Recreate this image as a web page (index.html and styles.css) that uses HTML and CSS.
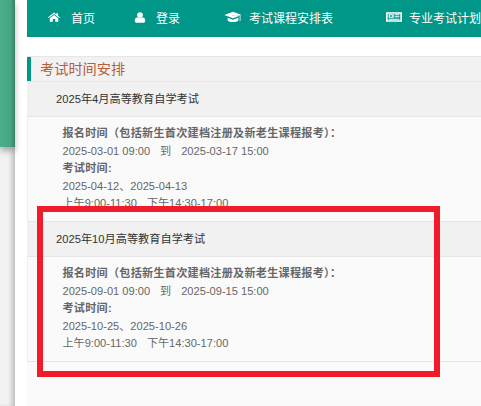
FILE: index.html
```html
<!DOCTYPE html>
<html lang="zh-CN">

<head>
  <meta charset="UTF-8" />
  <title>考试时间安排</title>
  <link rel="stylesheet" href="styles.css">
</head>

<body>
  <div class="page">
    <!-- 左侧边栏 -->
    <div class="side">
      <div class="side-top"></div>
    </div>
    <div class="main">
      <!-- 导航 -->
      <ul class="nav">
        <li class="nav-home">
          <svg class="ico" viewBox="0 0 24 20"><path d="M12 1 0 10.500l1.300 1.700L12 3.800l10.700 8.400 1.300-1.700-4-3.200V2.500h-3.500v2z" /><path d="M12 6 3.500 12.700V19.500h6v-5.500h5v5.500h6v-6.800z" /></svg>
          首页
        </li>
        <li class="nav-login">
          <svg class="ico" viewBox="0 0 20 20"><circle cx="10" cy="5.500" r="5.200" /><path d="M4.800 9.500c1.300 1.300 3.100 2 5.200 2s3.900-.7 5.200-2c2.800.5 4.300 2.700 4.300 6.300 0 2.500-1.500 3.900-3.700 3.900H4.200C2 19.700.5 18.300.5 15.800c0-3.600 1.500-5.800 4.300-6.300z" /></svg>
          登录
        </li>
        <li class="nav-course">
          <svg class="ico ico-cap" viewBox="0 0 26 18"><path d="M13 1 0 6l13 5 9-3.500-8.500-1-.3 1L12 7l1-.8 9.500 1.100L26 6z" /><path d="M5 10v4.500c2 2.500 14 2.500 16 0V10l-8 3zM23 8v7h1.200V7.500z" /></svg>
          考试课程安排表
        </li>
        <li class="nav-plan">
          <svg class="ico ico-news" viewBox="0 0 24 15"><path fill-rule="evenodd" d="M0 .5h24v14H0zM2.500 2.500v10h19v-10zM4 3.500h7.500v5H4zM6 5v2h3.500V5zM13 3.500h7V5h-7zM13 6.500h7V8h-7zM4 10h16v1.500H4z" /></svg>
          专业考试计划
        </li>
      </ul>

      <div class="panel">
        <h2 class="panel-title">考试时间安排</h2>

        <h3 class="exam-head">2025年4月高等教育自学考试</h3>
        <div class="exam-body">
          <p class="label">报名时间（包括新生首次建档注册及新老生课程报考）：</p>
          <p class="range"><span>2025-03-01 09:00</span><span>到</span><span>2025-03-17 15:00</span></p>
          <p class="label">考试时间:</p>
          <p>2025-04-12、2025-04-13</p>
          <p class="range"><span>上午9:00-11:30</span><span>下午14:30-17:00</span></p>
        </div>

        <h3 class="exam-head">2025年10月高等教育自学考试</h3>
        <div class="exam-body">
          <p class="label">报名时间（包括新生首次建档注册及新老生课程报考）：</p>
          <p class="range"><span>2025-09-01 09:00</span><span>到</span><span>2025-09-15 15:00</span></p>
          <p class="label">考试时间:</p>
          <p>2025-10-25、2025-10-26</p>
          <p class="range"><span>上午9:00-11:30</span><span>下午14:30-17:00</span></p>
        </div>
      </div>
    </div>
  </div>
  <!-- 红色标注框 -->
  <div class="mark"></div>
</body>

</html>
```
FILE: styles.css
```css
* {
  margin: 0;
  padding: 0;
  box-sizing: border-box;
}

li,
ol,
ul {
  list-style: none;
}

html,
body {
  height: 100%;
  overflow: hidden;
}

body {
  background-color: #fff;
  font-family: "Liberation Sans", "Noto Sans CJK SC", sans-serif;
  font-size: 11.1px;
  color: #666;
}

.page {
  display: flex;
  height: 100%;
}

.side {
  flex: none;
  width: 15px;
  background-color: #f2f2f2;
  box-shadow: inset -5px 0 5px -2px rgba(0, 0, 0, 0.22);
}

.side-top {
  height: 147px;
  background: linear-gradient(to right, #4cae8a, #45a581 70%, #3a7f66);
  box-shadow: 0 4px 6px rgba(0, 0, 0, 0.3);
}

.main {
  flex: 1;
  min-width: 0;
  padding-left: 12px;
  display: flex;
  flex-direction: column;
}

.nav {
  flex: none;
  display: flex;
  align-items: center;
  height: 37px;
  padding-bottom: 3px;
  background-color: #009688;
  color: #fff;
  font-size: 12px;
  white-space: nowrap;
  overflow: hidden;
}

.nav li {
  display: flex;
  align-items: center;
  flex: none;
}

.ico {
  display: block;
  flex: none;
  width: 12px;
  height: 10px;
  margin-right: 11px;
  fill: #fff;
}

.nav-home {
  margin-left: 21px;
}

.nav-login {
  margin-left: 39px;
}

.nav-course {
  margin-left: 44px;
}

.nav-plan {
  margin-left: 53px;
}

.nav-login .ico {
  height: 11px;
  margin-right: 10px;
}

.ico-cap {
  width: 18px;
  height: 12px;
  margin-right: 7px;
}

.ico-news {
  width: 16px;
  height: 10px;
  margin-right: 7px;
}

.panel {
  flex: 1;
  margin-top: 19px;
  background-color: #fafafa;
}

.panel-title {
  height: 26px;
  padding-left: 13px;
  border-top: 1px solid #e6e6e6;
  border-bottom: 1px solid #e6e6e6;
  background-color: #f2f2f2;
  box-shadow: inset 4px 0 0 #009688, inset 1px 0 0 #fafafa;
  font-size: 14.2px;
  font-weight: normal;
  line-height: 24px;
  color: #b5603a;
}

.exam-head {
  height: 35px;
  padding-left: 29px;
  border-bottom: 1px solid #e6e6e6;
  background-color: #f1f1f1;
  font-size: 11.2px;
  font-weight: normal;
  line-height: 35px;
  color: #333;
}

.exam-body {
  height: 105px;
  padding: 8px 0 0 34.500px;
  border-left: 1px solid #eee;
  border-bottom: 1px solid #e6e6e6;
  line-height: 17.500px;
  white-space: nowrap;
}

.label {
  font-weight: bold;
  letter-spacing: 0.28px;
}

.range {
  display: flex;
  gap: 10px;
}

.mark {
  position: absolute;
  left: 37px;
  top: 206px;
  width: 403px;
  height: 171px;
  border: 6px solid #f01c29;
}
```
